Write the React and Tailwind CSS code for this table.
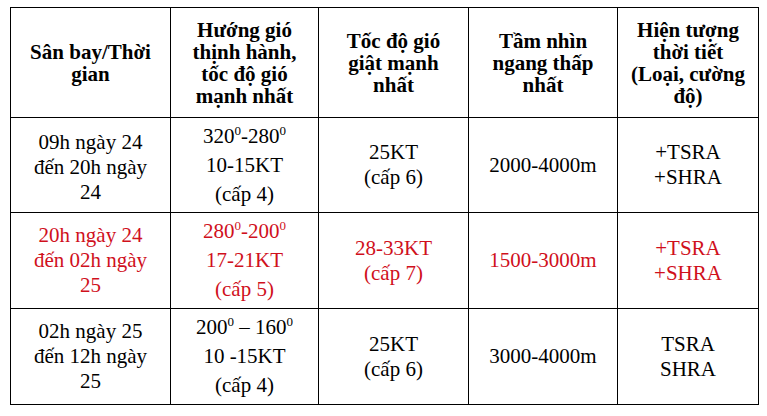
import React from "react";

const RED = "text-[#d0101c]";

function Deg() {
  return <sup className="text-[13px] leading-none relative -top-[8px]">0</sup>;
}

export default function App() {
  const th =
    "border border-black text-center align-middle font-['Liberation_Serif'] font-bold text-[21px] leading-[22px] px-1";
  const td =
    "border border-black text-center align-middle font-['Liberation_Serif'] text-[21px] leading-[25px] px-1";
  const td2 =
    "border border-black text-center align-middle font-['Liberation_Serif'] text-[21px] leading-[29px] px-1";
  return (
    <div className="w-[767px] h-[416px] bg-white pt-[7px] pl-[10px] font-['Liberation_Serif']">
      <table className="table-fixed border-collapse text-black w-[748px]">
        <colgroup>
          <col className="w-[160px]" />
          <col className="w-[148px]" />
          <col className="w-[150px]" />
          <col className="w-[149px]" />
          <col className="w-[141px]" />
        </colgroup>
        <tbody>
          <tr className="h-[110px]">
            <td className={th}>
              Sân bay/Thời
              <br />
              gian
            </td>
            <td className={th}>
              Hướng gió
              <br />
              thịnh hành,
              <br />
              tốc độ gió
              <br />
              mạnh nhất
            </td>
            <td className={th}>
              Tốc độ gió
              <br />
              giật mạnh
              <br />
              nhất
            </td>
            <td className={th}>
              Tầm nhìn
              <br />
              ngang thấp
              <br />
              nhất
            </td>
            <td className={th}>
              Hiện tượng
              <br />
              thời tiết
              <br />
              (Loại, cường
              <br />
              độ)
            </td>
          </tr>
          <tr className="h-[95px]">
            <td className={td}>
              <div className="pt-[5px]">
                09h ngày 24
                <br />
                đến 20h ngày
                <br />
                24
              </div>
            </td>
            <td className={td2}>
              320<Deg />-280<Deg />
              <br />
              10-15KT
              <br />
              (cấp 4)
            </td>
            <td className={td}>
              25KT
              <br />
              (cấp 6)
            </td>
            <td className={td}>2000-4000m</td>
            <td className={td}>
              +TSRA
              <br />
              +SHRA
            </td>
          </tr>
          <tr className={`h-[96px] ${RED}`}>
            <td className={td}>
              20h ngày 24
              <br />
              đến 02h ngày
              <br />
              25
            </td>
            <td className={td2}>
              280<Deg />-200<Deg />
              <br />
              17-21KT
              <br />
              (cấp 5)
            </td>
            <td className={td}>
              28-33KT
              <br />
              (cấp 7)
            </td>
            <td className={td}>1500-3000m</td>
            <td className={td}>
              +TSRA
              <br />
              +SHRA
            </td>
          </tr>
          <tr className="h-[96px]">
            <td className={td}>
              02h ngày 25
              <br />
              đến 12h ngày
              <br />
              25
            </td>
            <td className={td2}>
              200<Deg /> – 160<Deg />
              <br />
              10 -15KT
              <br />
              (cấp 4)
            </td>
            <td className={td}>
              25KT
              <br />
              (cấp 6)
            </td>
            <td className={td}>3000-4000m</td>
            <td className={td}>
              TSRA
              <br />
              SHRA
            </td>
          </tr>
        </tbody>
      </table>
    </div>
  );
}
